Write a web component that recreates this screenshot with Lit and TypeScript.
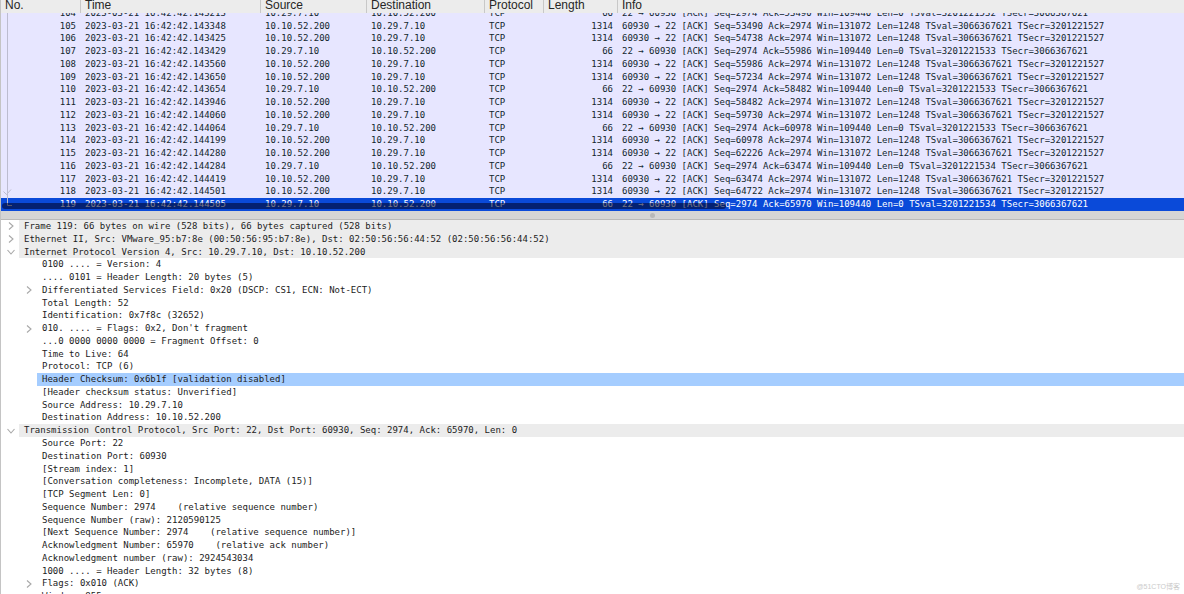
import { LitElement, html, css, svg } from "lit";
import { customElement, property } from "lit/decorators.js";
import { classMap } from "lit/directives/class-map.js";

interface Packet {
  no: number;
  time: string;
  peer: boolean;
  num: number;
  tsval: string;
}

const CLIENT = "10.10.52.200";
const SERVER = "10.29.7.10";
const DAY = "2023-03-21 16:42:42.";

const ack = (no: number, time: string, num: number, tsval: string): Packet => ({ no, time, peer: false, num, tsval });
const data = (no: number, time: string, num: number): Packet => ({ no, time, peer: true, num, tsval: "3066367621" });

const PACKETS: Packet[] = [
  ack(104, "143213", 53490, "3201221532"),
  data(105, "143348", 53490),
  data(106, "143425", 54738),
  ack(107, "143429", 55986, "3201221533"),
  data(108, "143560", 55986),
  data(109, "143650", 57234),
  ack(110, "143654", 58482, "3201221533"),
  data(111, "143946", 58482),
  data(112, "144060", 59730),
  ack(113, "144064", 60978, "3201221533"),
  data(114, "144199", 60978),
  data(115, "144280", 62226),
  ack(116, "144284", 63474, "3201221534"),
  data(117, "144419", 63474),
  data(118, "144501", 64722),
  ack(119, "144505", 65970, "3201221534"),
];

const info = (p: Packet) =>
  p.peer
    ? `60930 → 22 [ACK] Seq=${p.num} Ack=2974 Win=131072 Len=1248 TSval=${p.tsval} TSecr=3201221527`
    : `22 → 60930 [ACK] Seq=2974 Ack=${p.num} Win=109440 Len=0 TSval=${p.tsval} TSecr=3066367621`;

interface Field {
  text: string;
  top?: boolean;
  toggle?: "open" | "closed";
  selected?: boolean;
}

const FIELDS: Field[] = [
  { text: "Frame 119: 66 bytes on wire (528 bits), 66 bytes captured (528 bits)", top: true, toggle: "closed" },
  { text: "Ethernet II, Src: VMware_95:b7:8e (00:50:56:95:b7:8e), Dst: 02:50:56:56:44:52 (02:50:56:56:44:52)", top: true, toggle: "closed" },
  { text: "Internet Protocol Version 4, Src: 10.29.7.10, Dst: 10.10.52.200", top: true, toggle: "open" },
  { text: "0100 .... = Version: 4" },
  { text: ".... 0101 = Header Length: 20 bytes (5)" },
  { text: "Differentiated Services Field: 0x20 (DSCP: CS1, ECN: Not-ECT)", toggle: "closed" },
  { text: "Total Length: 52" },
  { text: "Identification: 0x7f8c (32652)" },
  { text: "010. .... = Flags: 0x2, Don't fragment", toggle: "closed" },
  { text: "...0 0000 0000 0000 = Fragment Offset: 0" },
  { text: "Time to Live: 64" },
  { text: "Protocol: TCP (6)" },
  { text: "Header Checksum: 0x6b1f [validation disabled]", selected: true },
  { text: "[Header checksum status: Unverified]" },
  { text: "Source Address: 10.29.7.10" },
  { text: "Destination Address: 10.10.52.200" },
  { text: "Transmission Control Protocol, Src Port: 22, Dst Port: 60930, Seq: 2974, Ack: 65970, Len: 0", top: true, toggle: "open" },
  { text: "Source Port: 22" },
  { text: "Destination Port: 60930" },
  { text: "[Stream index: 1]" },
  { text: "[Conversation completeness: Incomplete, DATA (15)]" },
  { text: "[TCP Segment Len: 0]" },
  { text: "Sequence Number: 2974    (relative sequence number)" },
  { text: "Sequence Number (raw): 2120590125" },
  { text: "[Next Sequence Number: 2974    (relative sequence number)]" },
  { text: "Acknowledgment Number: 65970    (relative ack number)" },
  { text: "Acknowledgment number (raw): 2924543034" },
  { text: "1000 .... = Header Length: 32 bytes (8)" },
  { text: "Flags: 0x010 (ACK)", toggle: "closed" },
  { text: "Window: 855" },
];

@customElement("packet-list")
class PacketList extends LitElement {
  @property({ type: Number }) selected = 119;

  static styles = css`
    :host {
      display: block;
      position: relative;
      background: #e7e6ff;
    }
    table {
      width: 100%;
      table-layout: fixed;
      border-collapse: separate;
      border-spacing: 0;
      color: #12272e;
    }
    .no { width: 79px; }
    .time { width: 180px; }
    .source { width: 106px; }
    .destination { width: 118px; }
    .protocol { width: 59px; }
    .length { width: 74px; }
    th {
      height: 13px;
      box-sizing: border-box;
      padding: 0 0 3px 4px;
      border-left: 1px solid #c8c8c8;
      background: #ececec;
      color: #262626;
      font: 400 12px/10px "Liberation Sans", Arial, sans-serif;
      text-align: left;
      white-space: nowrap;
    }
    th:first-child { border-left: 0; }
    td {
      padding: 0 0 0 5px;
      line-height: 12px;
      white-space: pre;
      overflow: hidden;
      vertical-align: top;
    }
    .number {
      padding: 0 4px 0 0;
      text-align: right;
    }
    .cut {
      display: flex;
      align-items: flex-end;
      height: 7px;
      overflow: hidden;
    }
    .number .cut { justify-content: flex-end; }
    .cut span { flex: none; line-height: 13px; }
    .selected td {
      background: #0a4ad9;
      color: #ffffff;
    }
    .thread {
      position: absolute;
      top: 13px;
      left: 0;
      width: 14px;
      height: 198px;
      fill: none;
      stroke: #bcbcd0;
    }
    .stroke {
      position: absolute;
      left: 1px;
      bottom: 2px;
      width: 61.2%;
      height: 6px;
      border-radius: 3px;
      background: rgba(0, 0, 30, 0.55);
    }
  `;

  private cell(text: string | number, cut: boolean) {
    return cut ? html`<div class="cut"><span>${text}</span></div>` : text;
  }

  private row(p: Packet, index: number) {
    const cut = index === 0;
    const src = p.peer ? CLIENT : SERVER;
    const dst = p.peer ? SERVER : CLIENT;
    const height = cut ? 7 : index % 4 === 1 ? 12 : 13;
    return html`<tr class=${classMap({ selected: p.no === this.selected })} style="height:${height}px">
      <td class="number">${this.cell(p.no, cut)}</td>
      <td>${this.cell(DAY + p.time, cut)}</td>
      <td>${this.cell(src, cut)}</td>
      <td>${this.cell(dst, cut)}</td>
      <td>${this.cell("TCP", cut)}</td>
      <td class="number">${this.cell(p.peer ? 1314 : 66, cut)}</td>
      <td>${this.cell(info(p), cut)}</td>
    </tr>`;
  }

  render() {
    return html`
      <table>
        <colgroup>
          <col class="no" /><col class="time" /><col class="source" /><col class="destination" />
          <col class="protocol" /><col class="length" /><col />
        </colgroup>
        <thead>
          <tr>
            <th>No.</th><th>Time</th><th>Source</th><th>Destination</th><th>Protocol</th><th>Length</th><th>Info</th>
          </tr>
        </thead>
        <tbody>${PACKETS.map((p, i) => this.row(p, i))}</tbody>
      </table>
      <svg class="thread" viewBox="0 0 14 198" aria-hidden="true">
        <path d="M6.5 0V192.5H11" />
        <path d="M2.5 178.500L5.500 181.500L10 176.500" />
      </svg>
      <div class="stroke"></div>
    `;
  }
}

@customElement("packet-details")
class PacketDetails extends LitElement {
  static styles = css`
    :host {
      display: block;
      overflow: hidden;
      background: #ffffff;
      color: #1c1c1c;
    }
    ul {
      display: grid;
      grid-auto-rows: 1fr;
      height: 383px;
      margin: 0;
      padding: 0;
      list-style: none;
    }
    li {
      display: flex;
      min-height: 0;
      padding-left: 18px;
    }
    li.top { padding-left: 0; }
    .gutter {
      flex: none;
      display: flex;
      width: 18px;
    }
    button {
      display: flex;
      align-items: center;
      justify-content: center;
      width: 18px;
      padding: 0 0 0 2px;
      border: 0;
      background: none;
    }
    svg {
      flex: none;
      width: 10px;
      height: 10px;
      fill: none;
      stroke: #a8a8a8;
      stroke-width: 1.1;
    }
    .text {
      flex: 1;
      min-width: 0;
      padding-left: 5px;
      line-height: 12px;
      white-space: pre;
    }
    .top .text { background: #ececec; }
    .selected .text { background: #a5cdff; }
  `;

  private toggle(field: Field) {
    const open = field.toggle === "open";
    return html`<button aria-label=${open ? "Collapse" : "Expand"} aria-expanded=${open ? "true" : "false"}>
      <svg viewBox="0 0 10 10">${open ? svg`<path d="M1.500 3L5 7L8.500 3" />` : svg`<path d="M3 1.500L7 5L3 8.500" />`}</svg>
    </button>`;
  }

  render() {
    return html`<ul>
      ${FIELDS.map(
        (f) => html`<li class=${classMap({ top: !!f.top, selected: !!f.selected })}>
          <span class="gutter">${f.toggle ? this.toggle(f) : ""}</span><span class="text">${f.text}</span>
        </li>`
      )}
    </ul>`;
  }
}

@customElement("app-root")
class AppRoot extends LitElement {
  static styles = css`
    :host {
      display: flex;
      flex-direction: column;
      position: relative;
      height: 100vh;
      box-sizing: border-box;
      overflow: hidden;
      border-left: 1px solid #c4c4c4;
      background: #ffffff;
      font: 9px/12px "DejaVu Sans Mono", monospace;
    }
    packet-list { flex: none; }
    packet-details {
      flex: 1;
      min-height: 0;
    }
    .splitter {
      flex: none;
      display: flex;
      align-items: center;
      justify-content: center;
      height: 9px;
      box-sizing: border-box;
      padding-left: 119px;
      border-bottom: 1px solid #bababa;
      background: #d5d5d5;
    }
    .grip {
      width: 5px;
      height: 5px;
      border-radius: 50%;
      background: #b8b8b8;
    }
    .mark {
      position: absolute;
      right: 4px;
      bottom: 2px;
      color: #cbcbcb;
      font: 7px/10px "Liberation Sans", "Noto Sans CJK SC", sans-serif;
    }
  `;

  render() {
    return html`
      <packet-list></packet-list>
      <div class="splitter" role="separator"><span class="grip"></span></div>
      <packet-details></packet-details>
      <span class="mark">@51CTO博客</span>
    `;
  }
}
